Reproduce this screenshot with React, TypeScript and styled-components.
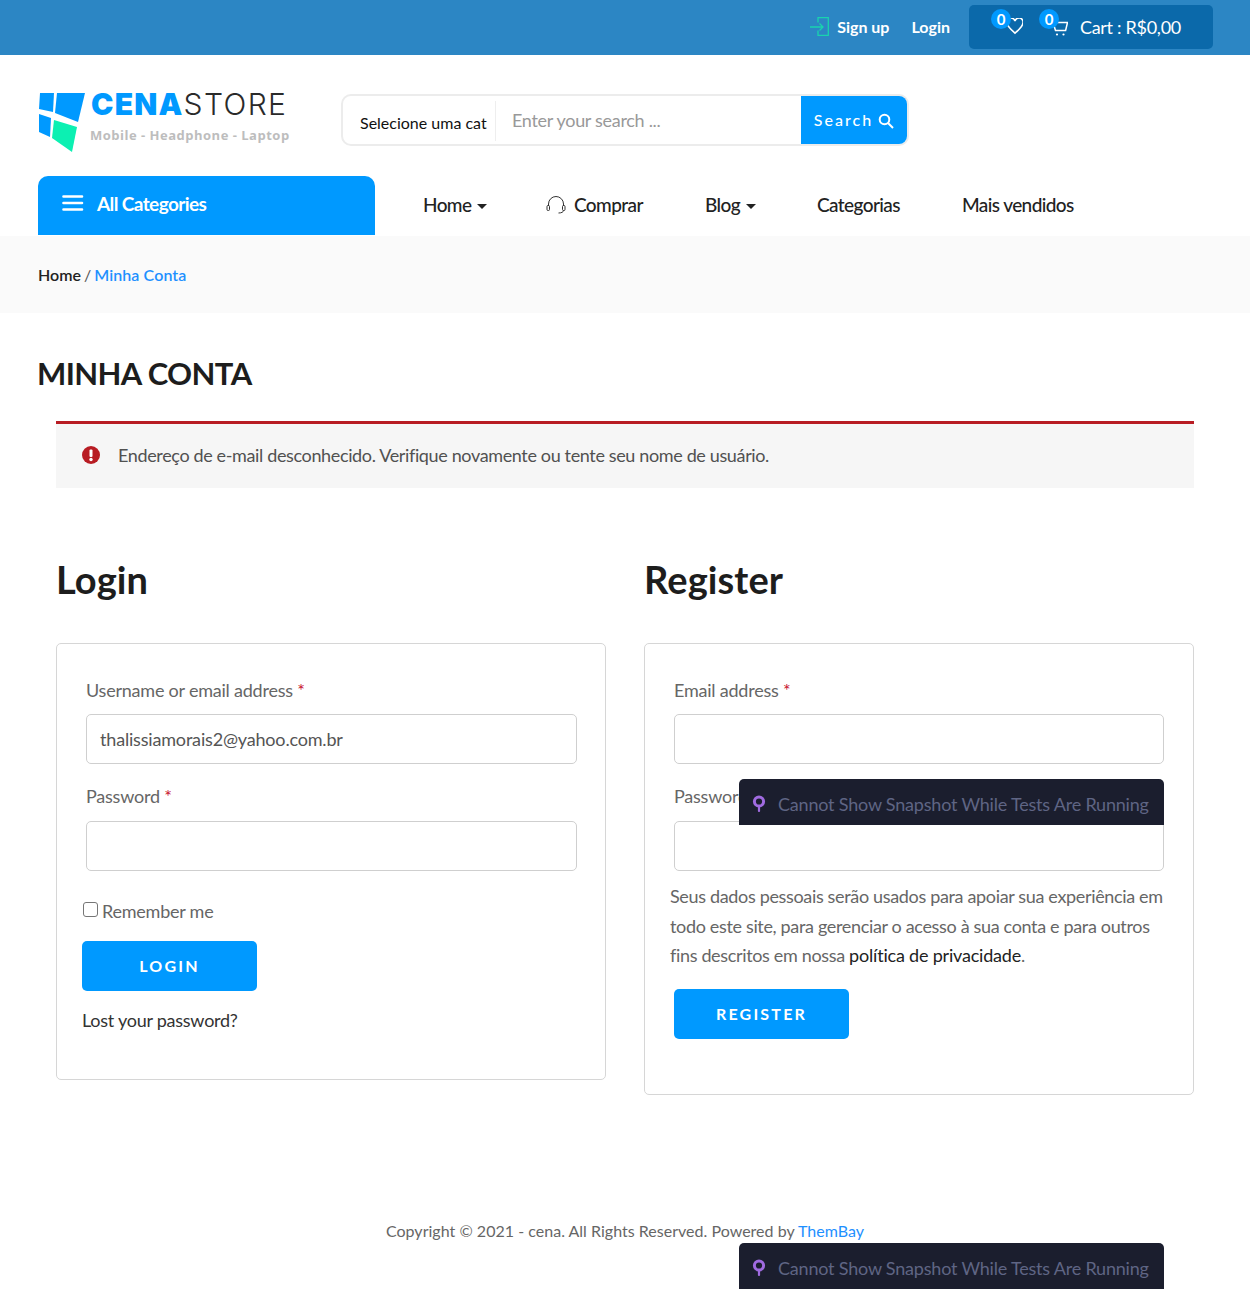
import React from "react";
import styled, { createGlobalStyle } from "styled-components";

const Global = createGlobalStyle`
  html, body { margin: 0; padding: 0; background: #fff; }
  body { font-family: Lato, "Liberation Sans", sans-serif; color: #666; font-size: 18px; }
  * { box-sizing: border-box; }
`;
const Page = styled.div`
  position: relative;
  width: 1250px;
  height: 1289px;
  overflow: hidden;
`;
const TopBar = styled.div`
  height: 55px;
  background: #2c86c4;
  display: flex;
  justify-content: flex-end;
  align-items: center;
  padding: 0 37px 0 0;
`;
const TopLink = styled.a<{ $mr: number }>`
  display: flex;
  align-items: center;
  gap: 8px;
  color: #fff;
  font-weight: 700;
  font-size: 16px;
  margin: -2px ${(p) => p.$mr}px 0 0;
`;
const CartBox = styled.div`
  width: 244px;
  height: 44px;
  background: #0b69aa;
  border-radius: 5px;
  display: flex;
  align-items: center;
  padding-left: 36px;
  margin-top: -1px;
  color: #fff;
`;
const IconWrap = styled.span<{ $mr: number }>`
  position: relative;
  display: flex;
  width: 18px;
  height: 18px;
  margin-right: ${(p) => p.$mr}px;
`;
const Badge = styled.span`
  position: absolute;
  left: -14px;
  top: -9px;
  width: 20px;
  height: 20px;
  border-radius: 50%;
  background: #0099ff;
  color: #fff;
  font-size: 15px;
  font-weight: 700;
  display: flex;
  align-items: center;
  justify-content: center;
`;
const CartText = styled.span`
  font-size: 18px;
  letter-spacing: -0.3px;
  margin: -1px 0 0 -1px;
`;
const Header = styled.div`
  height: 121px;
  padding: 39px 0 0 38px;
  display: flex;
  align-items: flex-start;
`;
const Logo = styled.div`
  width: 303px;
  height: 62px;
  display: flex;
  gap: 5px;
  margin-top: -1px;
`;
const LogoText = styled.div`
  display: flex;
  flex-direction: column;
  margin-top: -6px;
`;
const LogoTitle = styled.div`
  font-family: Inter, sans-serif;
  font-size: 30px;
  line-height: 34px;
  color: #2a2a2a;
  font-weight: 300;
  letter-spacing: 1.4px;
  b { color: #0099ff; font-weight: 900; letter-spacing: 1.2px; }
`;
const LogoSub = styled.div`
  font-family: "Open Sans", sans-serif;
  font-weight: 700;
  font-size: 13px;
  color: #bdbdbd;
  line-height: 18px;
  letter-spacing: 0.5px;
  margin: 5px 0 0 -1px;
`;
const SearchBox = styled.div`
  width: 568px;
  height: 52px;
  border: 2px solid #ececec;
  border-radius: 10px;
  display: flex;
  overflow: hidden;
`;
const CatSelect = styled.div`
  width: 153px;
  height: 40px;
  margin-top: 5px;
  border-right: 1px solid #eee;
  padding: 10px 0 0 17px;
  color: #111;
  font-size: 16px;
  line-height: 24px;
  white-space: nowrap;
  overflow: hidden;
`;
const SearchInput = styled.div`
  flex: 1;
  padding: 0 0 0 16px;
  color: #999;
  font-size: 18px;
  line-height: 48px;
  letter-spacing: -0.3px;
`;
const SearchButton = styled.div`
  width: 106px;
  background: #0099ff;
  color: #fff;
  display: flex;
  align-items: center;
  justify-content: center;
  gap: 5px;
  font-size: 16px;
  font-weight: 500;
  letter-spacing: 2px;
  padding-bottom: 2px;
  svg { margin-top: 3px; }
`;
const NavRow = styled.div`
  height: 60px;
  display: flex;
  padding-left: 38px;
`;
const AllCats = styled.div`
  width: 337px;
  height: 59px;
  background: #0099ff;
  border-radius: 10px 10px 0 0;
  color: #fff;
  font-weight: 700;
  font-size: 19px;
  letter-spacing: -0.6px;
  display: flex;
  align-items: center;
  gap: 13px;
  padding: 0 0 5px 24px;
`;
const Menu = styled.div`
  display: flex;
  align-items: center;
  padding: 0 0 2px 48px;
  height: 59px;
`;
const MenuItem = styled.div<{ $w: number }>`
  width: ${(p) => p.$w}px;
  display: flex;
  align-items: center;
  color: #222;
  font-size: 19px;
  font-weight: 500;
  letter-spacing: -0.6px;
  white-space: nowrap;
`;
const HeadsetIcon = styled.svg`
  margin-right: 8px;
`;
const Caret = styled.span`
  display: inline-block;
  margin-left: 6px;
  margin-top: 3px;
  border-left: 5px solid transparent;
  border-right: 5px solid transparent;
  border-top: 5px solid #222;
`;
const Crumbs = styled.div`
  height: 77px;
  background: #fafafa;
  padding: 0 0 0 38px;
  display: flex;
  align-items: center;
  font-size: 16px;
  font-weight: 600;
  color: #222;
  span { color: #555; margin: 0 3px; font-weight: 400; }
  a { color: #1e90ff; letter-spacing: 0.1px; }
`;
const Title = styled.h1`
  margin: 0;
  padding: 39px 0 0 37px;
  height: 108px;
  font-size: 31px;
  line-height: 42px;
  font-weight: 700;
  color: #1d1d1d;
  letter-spacing: -0.6px;
`;
const ErrorBar = styled.div`
  margin: 0 56px;
  height: 67px;
  border-top: 3px solid #b81c23;
  background: #f6f6f6;
  display: flex;
  align-items: center;
  gap: 18px;
  padding: 0 0 2px 26px;
  font-size: 18px;
  color: #515151;
  letter-spacing: -0.36px;
`;
const Columns = styled.div`
  display: grid;
  grid-template-columns: 550px 550px;
  gap: 38px;
  padding: 64px 56px 0;
  align-items: start;
`;
const Heading = styled.h2`
  margin: 0 0 36px 0;
  font-size: 38px;
  line-height: 55px;
  font-weight: 700;
  color: #1d1d1d;
  letter-spacing: 0.1px;
`;
const Card = styled.div<{ $h: number; $pr: number }>`
  height: ${(p) => p.$h}px;
  border: 1px solid #d6d6d6;
  border-radius: 5px;
  padding: 32px ${(p) => p.$pr}px 0 29px;
`;
const Label = styled.div<{ $mb: number }>`
  font-size: 18px;
  line-height: 28px;
  color: #666;
  letter-spacing: -0.22px;
  margin-bottom: ${(p) => p.$mb}px;
  i { color: #c8102e; font-style: normal; }
`;
const Field = styled.div`
  height: 50px;
  border: 1px solid #cfcfcf;
  border-radius: 5px;
  padding: 0 13px;
  font-size: 18px;
  line-height: 49px;
  color: #555;
  letter-spacing: -0.18px;
  margin-bottom: 18px;
`;
const RememberRow = styled.label`
  display: flex;
  align-items: center;
  gap: 4px;
  margin: 26px 0 0 -3px;
  height: 28px;
  font-size: 18px;
  color: #666;
  letter-spacing: -0.23px;
`;
const Check = styled.span`
  width: 15px;
  height: 15px;
  border: 1px solid #767676;
  border-radius: 3px;
  margin-top: -3px;
`;
const Submit = styled.div<{ $ml: number; $mt: number }>`
  width: 175px;
  height: 50px;
  margin: ${(p) => p.$mt}px 0 0 ${(p) => p.$ml}px;
  background: #0099ff;
  border-radius: 5px;
  color: #fff;
  font-weight: 700;
  font-size: 16px;
  letter-spacing: 2.2px;
  display: flex;
  align-items: center;
  justify-content: center;
  padding-bottom: 2px;
`;
const Lost = styled.div`
  margin: 15px 0 0 -4px;
  font-size: 18px;
  line-height: 28px;
  color: #333;
  letter-spacing: -0.25px;
`;
const Privacy = styled.p`
  margin: -7px -5px 0 -4px;
  font-size: 18px;
  line-height: 29.7px;
  color: #666;
  letter-spacing: -0.34px;
  a { color: #222; letter-spacing: -0.2px; }
`;
const Copyright = styled.div`
  position: absolute;
  left: 0;
  right: 0;
  top: 1219px;
  text-align: center;
  font-size: 16px;
  line-height: 24px;
  color: #666;
  letter-spacing: 0.02px;
  a { color: #1e90ff; }
`;
const Snapshot = styled.div<{ $top: number }>`
  position: absolute;
  left: 739px;
  top: ${(p) => p.$top}px;
  width: 425px;
  height: 46px;
  background: #1b1e2e;
  border-radius: 5px 5px 0 0;
  display: flex;
  align-items: center;
  gap: 12px;
  padding: 4px 0 0 13px;
  color: #5f6584;
  font-size: 18px;
  letter-spacing: -0.2px;
  white-space: nowrap;
`;

const PinIcon = () => (
  <svg width="14" height="20" viewBox="0 0 14 20">
    <circle cx="7" cy="7.5" r="4.6" fill="none" stroke="#a06be0" strokeWidth="3" />
    <rect x="5.9" y="12" width="2.2" height="6" rx="1" fill="#a06be0" />
  </svg>
);

const App = () => (
  <Page>
    <Global />
    <TopBar>
      <TopLink $mr={22}>
        <svg width="19" height="19" viewBox="0 0 19 19" fill="none" stroke="#19d3ae" strokeWidth="1.3">
          <path d="M8 5.5V0.7H18.3V18.3H8V13.5" />
          <path d="M0 10H13M9.5 6.5L13 10L9.5 13.5" />
        </svg>
        Sign up
      </TopLink>
      <TopLink $mr={19}>Login</TopLink>
      <CartBox>
        <IconWrap $mr={30}>
          <Badge>0</Badge>
          <svg width="18" height="18" viewBox="-0.5 3 22.5 22.5" fill="none" stroke="#fff" strokeWidth="2">
            <path d="M12 22C5 16 2 12.5 2 9a5 5 0 0 1 10-2 5 5 0 0 1 10 2c0 3.5-3 7-10 13z" />
          </svg>
        </IconWrap>
        <IconWrap $mr={10}>
          <Badge>0</Badge>
          <svg width="15" height="18" viewBox="0 -3 15 18" fill="none" stroke="#fff" strokeWidth="1.5">
            <path d="M4 1.5H14.5L12.6 9.5H2.5L0.8 4" />
            <circle cx="4" cy="13.5" r="1.1" fill="#fff" stroke="none" />
            <circle cx="10.5" cy="13.5" r="1.1" fill="#fff" stroke="none" />
          </svg>
        </IconWrap>
        <CartText>Cart : R$0,00</CartText>
      </CartBox>
    </TopBar>
    <Header>
      <Logo>
        <svg width="48" height="62" viewBox="0 0 48 62">
          <path d="M2 0H16L15 19L1 16Z" fill="#0099ff" />
          <path d="M19 0H47L40 29L17 20Z" fill="#0099ff" />
          <path d="M1 21L13 25L12 44L1 39Z" fill="#0099ff" />
          <path d="M16 27L39 34L34 59L14 45Z" fill="#0cf0b2" />
        </svg>
        <LogoText>
          <LogoTitle>
            <b>CENA</b>STORE
          </LogoTitle>
          <LogoSub>Mobile - Headphone - Laptop</LogoSub>
        </LogoText>
      </Logo>
      <SearchBox>
        <CatSelect>Selecione uma cat</CatSelect>
        <SearchInput>Enter your search ...</SearchInput>
        <SearchButton>
          Search
          <svg width="16" height="16" viewBox="0 0 16 16" fill="none" stroke="#fff" strokeWidth="2">
            <circle cx="6.5" cy="6.5" r="4.8" />
            <path d="M10 10L15 15" />
          </svg>
        </SearchButton>
      </SearchBox>
    </Header>
    <NavRow>
      <AllCats>
        <svg width="22" height="18" viewBox="0 0 22 18" fill="none" stroke="#fff" strokeWidth="2.6" strokeLinecap="round">
          <path d="M1.5 2.5H20M1.5 9H20M1.5 15.5H20" />
        </svg>
        All Categories
      </AllCats>
      <Menu>
        <MenuItem $w={123}>
          Home<Caret />
        </MenuItem>
        <MenuItem $w={159}>
          <HeadsetIcon width="20" height="18" viewBox="0 0 20 18" fill="none" stroke="#333" strokeWidth="1">
            <path d="M2.5 10V8a7.5 7.5 0 0 1 15 0v2" />
            <rect x="1" y="9.5" width="2.5" height="5" rx="1" />
            <rect x="16.5" y="9.5" width="2.5" height="5" rx="1" />
            <path d="M17.5 14.5c0 1.5-2 2.5-5 2.5" />
          </HeadsetIcon>
          Comprar
        </MenuItem>
        <MenuItem $w={112}>
          Blog<Caret />
        </MenuItem>
        <MenuItem $w={145}>Categorias</MenuItem>
        <MenuItem $w={130}>Mais vendidos</MenuItem>
      </Menu>
    </NavRow>
    <Crumbs>
      Home<span>/</span>
      <a>Minha Conta</a>
    </Crumbs>
    <Title>MINHA CONTA</Title>
    <ErrorBar>
      <svg width="18" height="18" viewBox="0 0 18 18">
        <circle cx="9" cy="9" r="9" fill="#b81c23" />
        <rect x="7.5" y="3.5" width="3" height="7.5" rx="1" fill="#fff" />
        <circle cx="9" cy="13.5" r="1.7" fill="#fff" />
      </svg>
      Endereço de e-mail desconhecido. Verifique novamente ou tente seu nome de usuário.
    </ErrorBar>
    <Columns>
      <div>
        <Heading>Login</Heading>
        <Card $h={437} $pr={28}>
          <Label $mb={10}>
            Username or email address <i>*</i>
          </Label>
          <Field>thalissiamorais2@yahoo.com.br</Field>
          <Label $mb={11}>
            Password <i>*</i>
          </Label>
          <Field />
          <RememberRow>
            <Check />
            Remember me
          </RememberRow>
          <Submit $ml={-4} $mt={16}>LOGIN</Submit>
          <Lost>Lost your password?</Lost>
        </Card>
      </div>
      <div>
        <Heading>Register</Heading>
        <Card $h={452} $pr={29}>
          <Label $mb={10}>
            Email address <i>*</i>
          </Label>
          <Field />
          <Label $mb={11}>
            Password <i>*</i>
          </Label>
          <Field />
          <Privacy>
            Seus dados pessoais serão usados para apoiar sua experiência em todo este site, para gerenciar o acesso à sua conta e para outros fins descritos em nossa <a>política de privacidade</a>.
          </Privacy>
          <Submit $ml={0} $mt={18}>REGISTER</Submit>
        </Card>
      </div>
    </Columns>
    <Copyright>
      Copyright © 2021 - cena. All Rights Reserved. Powered by <a>ThemBay</a>
    </Copyright>
    <Snapshot $top={779}>
      <PinIcon />
      Cannot Show Snapshot While Tests Are Running
    </Snapshot>
    <Snapshot $top={1243}>
      <PinIcon />
      Cannot Show Snapshot While Tests Are Running
    </Snapshot>
  </Page>
);

export default App;
